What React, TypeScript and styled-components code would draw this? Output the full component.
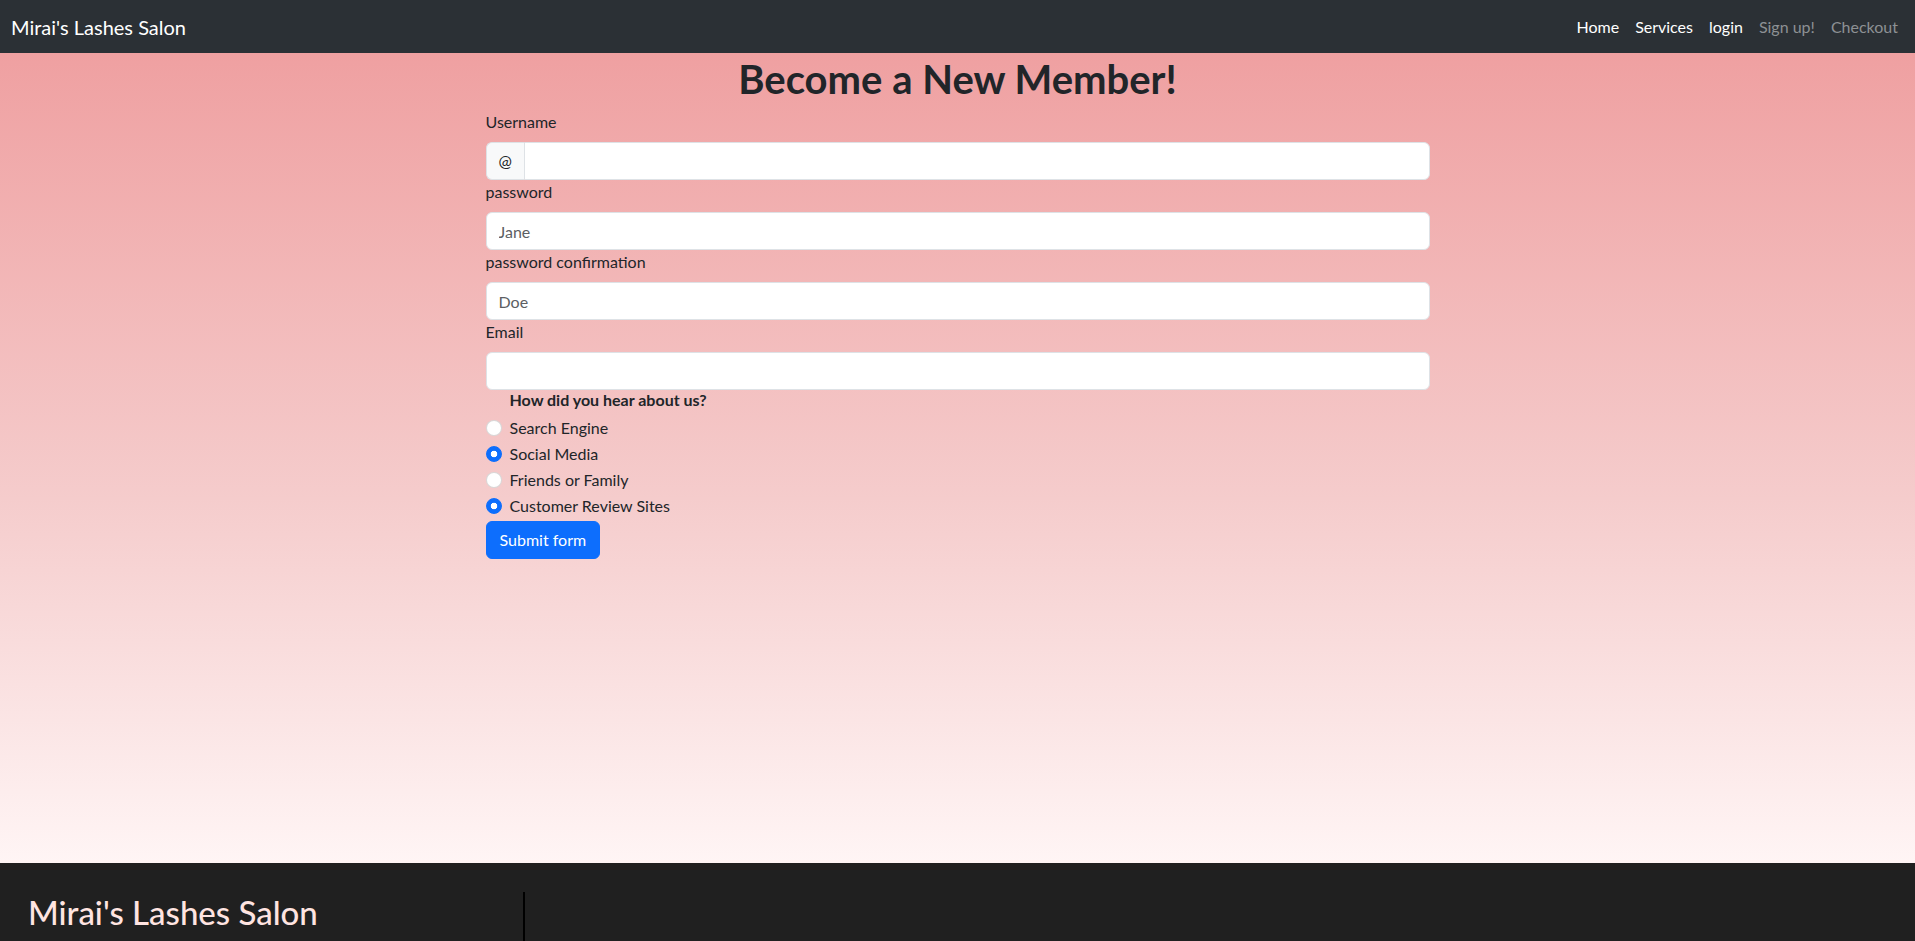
import React from "react";
import styled, { createGlobalStyle } from "styled-components";

const Global = createGlobalStyle`
  html, body { margin: 0; padding: 0; }
  body {
    font-family: Lato, "Open Sans", "Liberation Sans", sans-serif;
    color: #212529;
    font-size: 16px;
    line-height: 1.5;
    background: #202020;
  }
  * { box-sizing: border-box; }
`;

const Navbar = styled.nav`
  height: 53px;
  background: #2b3035;
  display: flex;
  align-items: center;
  justify-content: space-between;
  padding: 0 9px 0 11px;
`;

const Brand = styled.a`
  color: #fff;
  font-size: 20px;
  line-height: 30px;
  text-decoration: none;
`;

const NavList = styled.ul`
  display: flex;
  list-style: none;
  margin: 0;
  padding: 0;
`;

const NavLink = styled.a<{ $muted?: boolean }>`
  display: block;
  padding: 8px 8px;
  color: ${(p) => (p.$muted ? "#8d9094" : "#ffffff")};
  text-decoration: none;
  font-size: 16px;
  line-height: 24px;
`;

const Main = styled.main`
  height: 810px;
  background: linear-gradient(to bottom, #efa0a1 0%, #f5cccc 55%, #fff5f5 100%);
  display: flex;
  flex-direction: column;
  align-items: center;
`;

const Title = styled.h1`
  font-size: 40px;
  font-weight: 700;
  line-height: 48px;
  margin: 2px 0 7px;
  color: #212529;
`;

const Form = styled.form`
  width: 944px;
  display: flex;
  flex-direction: column;
`;

const Label = styled.label`
  display: block;
  font-size: 16px;
  line-height: 24px;
  margin-bottom: 8px;
`;

const InputGroup = styled.div`
  display: flex;
  width: 100%;
`;

const Addon = styled.span`
  display: flex;
  align-items: center;
  padding: 6px 12px;
  background: #f8f9fa;
  border: 1px solid #dee2e6;
  border-right: none;
  border-radius: 6px 0 0 6px;
  font-size: 16px;
  line-height: 24px;
  color: #212529;
`;

const TextInput = styled.input<{ $joined?: boolean }>`
  display: block;
  width: 100%;
  flex: ${(p) => (p.$joined ? "1 1 auto" : "0 0 auto")};
  height: 38px;
  padding: 6px 12px;
  font-family: inherit;
  font-size: 16px;
  line-height: 24px;
  color: #212529;
  background: #fff;
  border: 1px solid #dee2e6;
  border-radius: ${(p) => (p.$joined ? "0 6px 6px 0" : "6px")};
  outline: none;
  &::placeholder { color: #5c5f63; opacity: 1; }
`;

const Fieldset = styled.fieldset`
  border: none;
  margin: 0;
  padding: 0;
`;

const Legend = styled.legend`
  padding: 0 0 6px 24px;
  font-size: 16px;
  font-weight: 700;
  line-height: 20px;
`;

const Check = styled.div`
  display: flex;
  align-items: flex-start;
  min-height: 24px;
  margin-bottom: 2px;
`;

const Radio = styled.input`
  appearance: none;
  width: 16px;
  height: 16px;
  margin: 4px 8px 0 0;
  border-radius: 50%;
  border: 1px solid rgba(0, 0, 0, 0.15);
  background: #fff;
  flex-shrink: 0;
  &:checked {
    border-color: #0d6efd;
    background: radial-gradient(circle, #fff 0 3px, #0d6efd 3.6px);
  }
`;

const RadioLabel = styled.label`
  font-size: 16px;
  line-height: 24px;
`;

const Submit = styled.button`
  align-self: flex-start;
  margin-top: 1px;
  padding: 6px 13px;
  font-family: inherit;
  font-size: 16px;
  line-height: 24px;
  color: #fff;
  background: #0d6efd;
  border: 1px solid #0d6efd;
  border-radius: 6px;
  cursor: pointer;
`;

const Footer = styled.footer`
  background: #202020;
  display: flex;
  height: 200px;
`;

const FooterBrandCol = styled.div`
  width: 523px;
  padding: 29px 0 0 28px;
`;

const FooterBrand = styled.h2`
  margin: 0;
  font-size: 33px;
  font-weight: 500;
  line-height: 40px;
  color: #ffe4e1;
`;

const FooterCol = styled.div`
  margin-top: 29px;
  border-left: 2px solid #000;
  flex: 1;
`;

const radios = [
  { id: "r1", label: "Search Engine", checked: false },
  { id: "r2", label: "Social Media", checked: true },
  { id: "r3", label: "Friends or Family", checked: false },
  { id: "r4", label: "Customer Review Sites", checked: true },
];

export default function App() {
  return (
    <>
      <Global />
      <Navbar>
        <Brand href="#">Mirai's Lashes Salon</Brand>
        <NavList>
          <li><NavLink href="#">Home</NavLink></li>
          <li><NavLink href="#">Services</NavLink></li>
          <li><NavLink href="#">login</NavLink></li>
          <li><NavLink href="#" $muted>Sign up!</NavLink></li>
          <li><NavLink href="#" $muted>Checkout</NavLink></li>
        </NavList>
      </Navbar>
      <Main>
        <Title>Become a New Member!</Title>
        <Form onSubmit={(e) => e.preventDefault()}>
          <Label htmlFor="username">Username</Label>
          <InputGroup>
            <Addon>@</Addon>
            <TextInput id="username" $joined />
          </InputGroup>
          <Label htmlFor="pw">password</Label>
          <TextInput id="pw" placeholder="Jane" />
          <Label htmlFor="pw2">password confirmation</Label>
          <TextInput id="pw2" placeholder="Doe" />
          <Label htmlFor="email">Email</Label>
          <TextInput id="email" />
          <Fieldset>
            <Legend>How did you hear about us?</Legend>
            {radios.map((r) => (
              <Check key={r.id}>
                <Radio type="radio" id={r.id} name={r.id} defaultChecked={r.checked} />
                <RadioLabel htmlFor={r.id}>{r.label}</RadioLabel>
              </Check>
            ))}
          </Fieldset>
          <Submit type="submit">Submit form</Submit>
        </Form>
      </Main>
      <Footer>
        <FooterBrandCol>
          <FooterBrand>Mirai's Lashes Salon</FooterBrand>
        </FooterBrandCol>
        <FooterCol />
      </Footer>
    </>
  );
}
